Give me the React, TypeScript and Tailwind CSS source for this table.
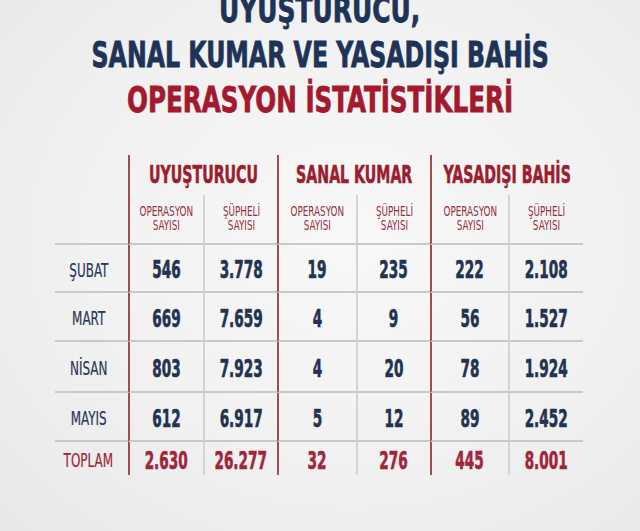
const font = "font-['DejaVu_Sans_Condensed','Liberation_Sans',sans-serif]";

const rows = [
  ['ŞUBAT', '546', '3.778', '19', '235', '222', '2.108'],
  ['MART', '669', '7.659', '4', '9', '56', '1.527'],
  ['NİSAN', '803', '7.923', '4', '20', '78', '1.924'],
  ['MAYIS', '612', '6.917', '5', '12', '89', '2.452'],
];
const total = ['TOPLAM', '2.630', '26.277', '32', '276', '445', '8.001'];
const rowHeights = ['h-[48px]', 'h-[49px]', 'h-[51px]', 'h-[49px]'];

const groups = ['UYUŞTURUCU', 'SANAL KUMAR', 'YASADIŞI BAHİS'];
const subs = [
  ['OPERASYON', 'SAYISI'],
  ['ŞÜPHELİ', 'SAYISI'],
];

const red = 'border-l-2 border-l-[#a34b52]';
const grey = 'border-l-2 border-l-[#d4d4d4]';
const sideBorder = (i: number) => (i % 2 === 1 ? red : grey);

function Cell({ value, i, className }: { value: string; i: number; className: string }) {
  return (
    <div className={`flex items-center justify-center pt-[4px] ${sideBorder(i)} ${className}`}>
      <span className="inline-block whitespace-nowrap text-[24px] font-bold leading-none scale-x-[0.63] [-webkit-text-stroke:0.6px]">
        {value}
      </span>
    </div>
  );
}

export default function App() {
  return (
    <div
      className={`relative flex h-[531px] w-[640px] flex-col overflow-hidden bg-[radial-gradient(ellipse_at_55%_45%,#f8f8f8_0%,#f1f1f1_55%,#e8e8e8_100%)] ${font}`}
    >
      <div className="-mt-[13px] flex flex-col items-center text-[36px] font-bold leading-[45px] text-[#1e3358] [-webkit-text-stroke:0.8px]">
        <div className="flex h-[45px] justify-center">
          <span className="inline-block whitespace-nowrap scale-x-[0.77]">UYUŞTURUCU,</span>
        </div>
        <div className="flex h-[45px] justify-center">
          <span className="inline-block whitespace-nowrap scale-x-[0.73]">SANAL KUMAR VE YASADIŞI BAHİS</span>
        </div>
        <div className="flex h-[45px] justify-center text-[#a3192e]">
          <span className="inline-block whitespace-nowrap scale-x-[0.76]">OPERASYON İSTATİSTİKLERİ</span>
        </div>
      </div>

      <div className="ml-[55px] mt-[33px] grid w-[528px] grid-cols-[73px_75px_74px_79px_74px_78px_75px]">
        {/* group headers */}
        <div className="h-[40px]" />
        {groups.map((g) => (
          <div key={g} className={`col-span-2 flex h-[40px] justify-center ${red}`}>
            <span className="inline-block whitespace-nowrap text-[25px] font-bold leading-[40px] text-[#9b1d2e] scale-x-[0.63] [-webkit-text-stroke:0.6px]">
              {g}
            </span>
          </div>
        ))}

        {/* sub headers */}
        <div className="h-[50px] border-b-2 border-b-[#c9c9c9]" />
        {[0, 1, 2, 3, 4, 5].map((k) => {
          const s = subs[k % 2];
          return (
            <div
              key={k}
              className={`flex h-[50px] justify-center border-b-2 border-b-[#c9c9c9] pt-[9px] text-center text-[14px] leading-[14px] text-[#94303b] ${sideBorder(k + 1)}`}
            >
              <span className="inline-block h-fit whitespace-nowrap scale-x-[0.7]">
                {s[0]}
                <br />
                {s[1]}
              </span>
            </div>
          );
        })}

        {/* data rows */}
        {rows.map((r, ri) =>
          r.map((v, i) =>
            i === 0 ? (
              <div
                key={`${ri}-${i}`}
                className={`flex items-center justify-center border-b-2 border-b-[#c9c9c9] pr-[6px] pt-[4px] text-[19px] leading-none text-[#2b3754] ${rowHeights[ri]}`}
              >
                <span className="inline-block whitespace-nowrap scale-x-[0.7] [-webkit-text-stroke:0.2px]">{v}</span>
              </div>
            ) : (
              <Cell
                key={`${ri}-${i}`}
                value={v}
                i={i}
                className={`border-b-2 border-b-[#c9c9c9] text-[#22324f] ${rowHeights[ri]}`}
              />
            )
          )
        )}

        {/* total row */}
        {total.map((v, i) =>
          i === 0 ? (
            <div
              key={`t-${i}`}
              className="flex h-[33px] items-center justify-center pr-[6px] pt-[4px] text-[19px] leading-none text-[#a0243a]"
            >
              <span className="inline-block whitespace-nowrap scale-x-[0.7] [-webkit-text-stroke:0.2px]">{v}</span>
            </div>
          ) : (
            <Cell key={`t-${i}`} value={v} i={i} className="h-[33px] text-[#a0243a]" />
          )
        )}
      </div>
    </div>
  );
}
